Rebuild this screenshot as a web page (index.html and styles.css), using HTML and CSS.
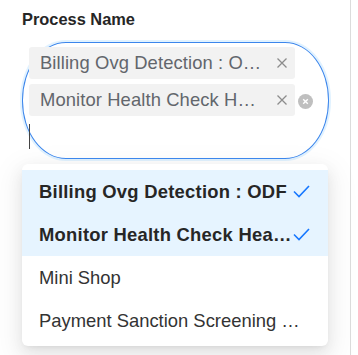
FILE: index.html
```html
<!DOCTYPE html>
<html lang="en">
<head>
<meta charset="utf-8">
<title>Process Name</title>
<link rel="stylesheet" href="styles.css">
</head>
<body>
<div class="panel">
  <div class="label">Process Name</div>
  <div class="select">
    <div class="tags">
      <div class="tag">
        <span class="tag-text">Billing Ovg Detection : ODF</span>
        <svg class="tag-x" width="12" height="12" viewBox="0 0 12 12"><path d="M1.5 1.5 L10.5 10.5 M10.5 1.5 L1.5 10.5" stroke="#8c8c8c" stroke-width="1.3" fill="none"/></svg>
      </div>
      <div class="tag">
        <span class="tag-text">Monitor Health Check Health Service</span>
        <svg class="tag-x" width="12" height="12" viewBox="0 0 12 12"><path d="M1.5 1.5 L10.5 10.5 M10.5 1.5 L1.5 10.5" stroke="#8c8c8c" stroke-width="1.3" fill="none"/></svg>
      </div>
      <div class="cursor"></div>
    </div>
    <svg class="clear" width="15" height="15" viewBox="0 0 15 15"><circle cx="7.5" cy="7.5" r="7.5" fill="#bfbfbf"/><path d="M5.2 5.2 L9.8 9.8 M9.8 5.2 L5.2 9.8" stroke="#fff" stroke-width="1.4" fill="none"/></svg>
  </div>
  <div class="dropdown">
    <div class="option selected"><span class="opt-text">Billing Ovg Detection : ODF</span><svg class="check" width="17" height="13" viewBox="0 0 17 13"><path d="M1 6.5 L6 11.5 L16 1" stroke="#1677ff" stroke-width="1.6" fill="none"/></svg></div>
    <div class="option selected"><span class="opt-text">Monitor Health Check Health Service</span><svg class="check" width="17" height="13" viewBox="0 0 17 13"><path d="M1 6.5 L6 11.5 L16 1" stroke="#1677ff" stroke-width="1.6" fill="none"/></svg></div>
    <div class="option"><span class="opt-text">Mini Shop</span></div>
    <div class="option"><span class="opt-text">Payment Sanction Screening Service</span></div>
  </div>
</div>
</body>
</html>
```
FILE: styles.css
```css
html, body {
  margin: 0;
  padding: 0;
  background: #fff;
}
body {
  font-family: "Liberation Sans", Arial, sans-serif;
}
.panel {
  height: 355px;
  padding: 8px 0 0 22px;
  box-sizing: border-box;
  width: 351px;
  border-right: 1px solid #dcdcdc;
}
.label {
  font-size: 16.4px;
  font-weight: bold;
  color: #262626;
  line-height: 22px;
  margin-bottom: 12px;
}
.select {
  position: relative;
  width: 307px;
  height: 117px;
  box-sizing: border-box;
  border: 1px solid #3b86ec;
  border-radius: 44px / 58px;
  box-shadow: 0 0 0 2px rgba(5, 145, 255, 0.12);
  padding: 4px 0 0 6px;
}
.tags {
  display: flex;
  flex-direction: column;
  gap: 5px;
}
.tag {
  display: flex;
  align-items: center;
  width: 266px;
  height: 32px;
  box-sizing: border-box;
  background: #f2f2f2;
  border-radius: 3px;
  padding: 0 7px 0 11px;
}
.tag-text {
  flex: 1;
  min-width: 0;
  font-size: 18.4px;
  letter-spacing: 0.1px;
  color: #62666c;
  white-space: nowrap;
  overflow: hidden;
  text-overflow: ellipsis;
  margin-right: 11px;
}
.tag-x {
  flex: none;
}
.cursor {
  width: 1px;
  height: 25px;
  background: #444;
  margin-top: 3px;
}
.clear {
  position: absolute;
  left: 275px;
  top: 51px;
}
.dropdown {
  margin-top: 5px;
  width: 306px;
  box-sizing: border-box;
  background: #fff;
  border-radius: 6px;
  padding: 6px 0 4px;
  box-shadow: 0 6px 16px 0 rgba(0, 0, 0, 0.08), 0 3px 6px -4px rgba(0, 0, 0, 0.12), 0 9px 28px 8px rgba(0, 0, 0, 0.05);
}
.option {
  display: flex;
  align-items: center;
  height: 43px;
  padding: 0 18px 0 17px;
  font-size: 18.4px;
  color: #333;
}
.option.selected {
  background: #e6f4ff;
  font-weight: bold;
  letter-spacing: 0.25px;
  color: #262626;
}
.opt-text {
  flex: 1;
  min-width: 0;
  white-space: nowrap;
  overflow: hidden;
  text-overflow: ellipsis;
}
.check {
  flex: none;
  margin-left: 0;
}
```
